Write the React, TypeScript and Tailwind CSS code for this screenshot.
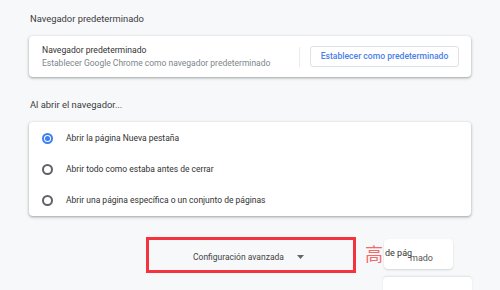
import React from 'react';

const cardShadow =
  'bg-white rounded-[4px] shadow-[0_1px_2px_rgba(60,64,67,0.3),0_1px_3px_1px_rgba(60,64,67,0.15)]';

const Radio: React.FC<{ checked?: boolean }> = ({ checked }) => (
  <span
    className={
      checked
        ? 'flex h-[11px] w-[11px] items-center justify-center rounded-full border-2 border-[#3b7ff2]'
        : 'flex h-[11px] w-[11px] items-center justify-center rounded-full border-2 border-[#5f6368]'
    }
  >
    {checked && <span className="h-[5px] w-[5px] rounded-full bg-[#3b7ff2]" />}
  </span>
);

const App: React.FC = () => {
  const options = [
    { label: 'Abrir la página Nueva pestaña', checked: true },
    { label: 'Abrir todo como estaba antes de cerrar', checked: false },
    { label: 'Abrir una página específica o un conjunto de páginas', checked: false },
  ];

  return (
    <div className="h-[290px] w-[500px] overflow-hidden bg-[#f7f8fa] font-['Roboto',sans-serif] text-[#333]">
      <div className="w-[471px] pl-[29px] pt-[12px]">
        {/* Default browser */}
        <h2 className="pl-[1px] text-[9.4px] leading-[14px] text-[#3c3c3c]">Navegador predeterminado</h2>
        <div className={`${cardShadow} mt-[10px] flex h-[41px] items-center pl-[13px] pr-[12px]`}>
          <div className="flex-1 leading-[13px]">
            <div className="text-[8.6px] text-[#333]">Navegador predeterminado</div>
            <div className="text-[8.5px] text-[#80868b]">
              Establecer Google Chrome como navegador predeterminado
            </div>
          </div>
          <div className="mr-[10px] h-[20px] w-px bg-[#ececec]" />
          <button className="flex h-[21px] w-[149px] items-center justify-center rounded-[3px] border border-[#dfe1e5] bg-white text-[8.6px] font-medium text-[#4a80e8]">
            Establecer como predeterminado
          </button>
        </div>

        {/* On startup */}
        <h2 className="mt-[21px] pl-[1px] text-[9.4px] leading-[14px] text-[#3c3c3c]">Al abrir el navegador...</h2>
        <div className={`${cardShadow} mt-[10px] flex h-[94px] flex-col justify-center`}>
          {options.map((o) => (
            <div key={o.label} className="flex h-[31px] items-center pl-[13px]">
              <Radio checked={o.checked} />
              <span className="ml-[13px] text-[8.5px] text-[#333]">{o.label}</span>
            </div>
          ))}
        </div>
      </div>

      {/* Advanced settings row */}
      <div className="relative mt-[21px] flex items-start">
        <div className="ml-[146px] flex h-[36px] w-[210px] items-center border-[3px] border-[#f5333f] pt-[4px]">
          <span className="ml-[44px] text-[8.5px] text-[#444]">Configuración avanzada</span>
          <svg className="ml-[13px]" width="7" height="4" viewBox="0 0 7 4">
            <path d="M0 0h7L3.5 4z" fill="#666" />
          </svg>
        </div>
        <span className="ml-[9px] mt-[6px] font-['Noto_Sans_CJK_SC',serif] text-[18px] leading-[20px] text-[#f26a6a]">
          高
        </span>
        <div className="relative ml-[1px] mt-[2px] h-[30px] w-[69px] rounded-[4px] bg-white shadow-[0_1px_2px_rgba(60,64,67,0.2)]">
          <span className="absolute left-[1px] top-[8px] text-[9px] leading-[12px] text-[#333]">de pág</span>
          <span className="absolute left-[26px] top-[13px] text-[9px] leading-[12px] text-[#555]">mado</span>
        </div>
        <div className="absolute left-[383px] top-[40px] h-[20px] w-[89px] rounded-t-[4px] bg-white shadow-[0_-1px_2px_rgba(60,64,67,0.12)]" />
      </div>
    </div>
  );
};

export default App;
